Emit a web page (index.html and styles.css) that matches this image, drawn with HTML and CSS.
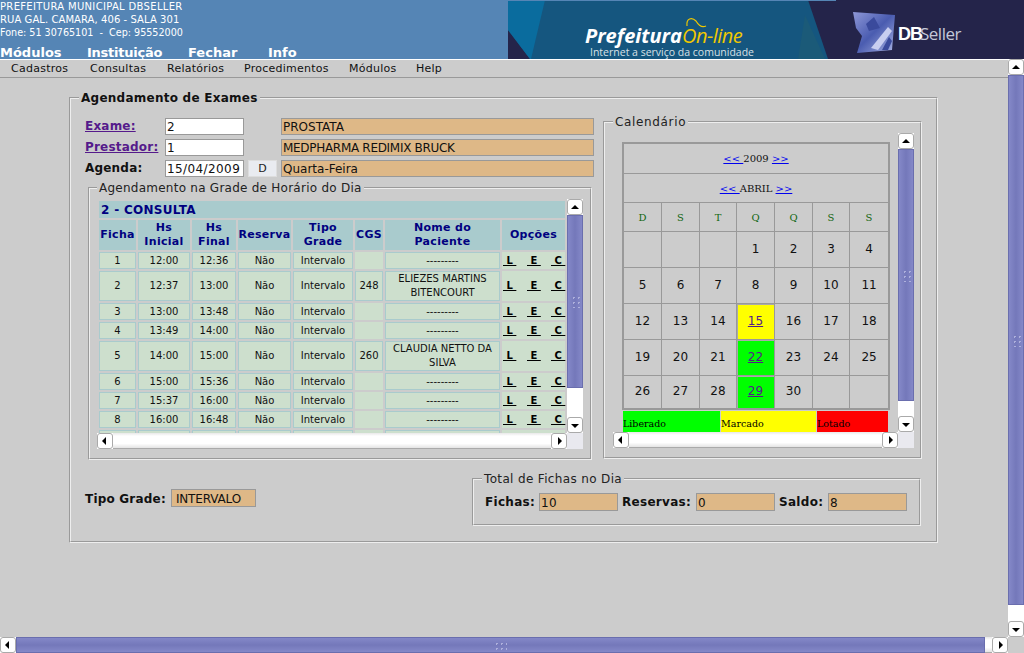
FILE: index.html
```html
<!DOCTYPE html>
<html lang="pt-BR">
  <head>
    <meta charset="UTF-8" />
    <title>Agendamento de Exames</title>
    <link rel="stylesheet" href="styles.css">
  </head>
  <body>
    <div class="topo">
      <div class="topo-esq">
        <div class="endereco">
          <div class="end-1">PREFEITURA MUNICIPAL DBSELLER</div>
          <div class="end-2">RUA GAL. CAMARA, 406 - SALA 301</div>
          <div class="end-3">Fone: 51 30765101 &nbsp;- &nbsp;Cep: 95552000</div>
        </div>
        <div class="nav">
          <span class="nav-1">Módulos</span>
          <span class="nav-2">Instituição</span>
          <span class="nav-3">Fechar</span>
          <span>Info</span>
        </div>
      </div>
      <svg class="banner" width="516" height="59" viewBox="0 0 516 59">
        <defs>
          <linearGradient id="cubo" x1="0" y1="0" x2="1" y2="1">
            <stop offset="0" stop-color="#8f98d8" />
            <stop offset="0.5" stop-color="#4a5cb0" />
            <stop offset="1" stop-color="#aab4e4" />
          </linearGradient>
        </defs>
        <rect width="516" height="59" fill="#24244a" />
        <polygon points="0,0 300,0 320,59 22,59 0,30" fill="#15567f" />
        <polygon points="0,0 37,0 23,59 22,59 0,30" fill="#0a6c9e" />
        <polygon points="297,15 317,59 290,59" fill="#1b5a78" />
        <rect width="328" height="1" fill="#5585b5" />
        <text x="77" y="43" class="logo-pref">Prefeitura</text>
        <text x="174" y="43" class="logo-on">On-line</text>
        <path d="M179 26 C178 18 184 17 188 21 C191 26 194 28 198 26" fill="none" stroke="#f0c800" stroke-width="1.2" />
        <text x="82" y="56" class="logo-sub">Internet a serviço da comunidade</text>
        <polygon points="345,12 387,15 384,50 349,53 354,36 348,28" fill="url(#cubo)" />
        <polygon points="358,24 366,17 372,28 361,31" fill="#3a4a9c" />
        <path d="M363 48 L380 27 L384 31 L370 50 Z" fill="#c8cef0" />
        <path d="M374 50 L381 37 L384 41 L380 50 Z" fill="#3a4a9c" />
        <text x="390" y="40" class="logo-db">DB</text>
        <text x="412" y="40" class="logo-seller">Seller</text>
      </svg>
    </div>

    <div class="corpo">
      <div class="conteudo">
        <div class="menu">
          <span class="m-cad">Cadastros</span>
          <span class="m-con">Consultas</span>
          <span class="m-rel">Relatórios</span>
          <span class="m-pro">Procedimentos</span>
          <span class="m-mod">Módulos</span>
          <span>Help</span>
        </div>

        <fieldset class="quadro-principal">
          <legend>Agendamento de Exames</legend>
          <div class="colunas">
            <div class="col-esq">
              <div class="linha-form">
                <a class="rotulo" href="#">Exame:</a>
                <input class="campo" type="text" value="2" />
                <span></span>
                <input class="campo-desc" type="text" value="PROSTATA" />
              </div>
              <div class="linha-form">
                <a class="rotulo" href="#">Prestador:</a>
                <input class="campo" type="text" value="1" />
                <span></span>
                <input class="campo-desc campo-nome" type="text" value="MEDPHARMA REDIMIX BRUCK" />
              </div>
              <div class="linha-form">
                <b class="rotulo">Agenda:</b>
                <input class="campo campo-num" type="text" value="15/04/2009" />
                <button class="btn-d">D</button>
                <input class="campo-desc" type="text" value="Quarta-Feira" />
              </div>

              <fieldset class="quadro-grade">
                <legend>Agendamento na Grade de Horário do Dia</legend>
                <div class="painel painel-grade">
                  <div class="painel-conteudo">
                    <table class="grade">
                      <colgroup>
                        <col class="c1" /><col class="c2" /><col class="c3" /><col class="c4" />
                        <col class="c5" /><col class="c6" /><col class="c7" /><col class="c8" />
                      </colgroup>
                      <tr class="tit"><th colspan="8">2 - CONSULTA</th></tr>
                      <tr class="cab">
                        <th>Ficha</th><th>Hs<br />Inicial</th><th>Hs<br />Final</th><th>Reserva</th>
                        <th>Tipo<br />Grade</th><th>CGS</th><th>Nome do<br />Paciente</th><th>Opções</th>
                      </tr>
                      <tr>
                        <td>1</td><td>12:00</td><td>12:36</td><td>Não</td><td>Intervalo</td><td class="vazio"></td><td>---------</td>
                        <td class="op"><div class="opcoes"><a href="#">&nbsp;L&nbsp;</a><a href="#">&nbsp;E&nbsp;</a><a href="#">&nbsp;C&nbsp;</a></div></td>
                      </tr>
                      <tr class="alta">
                        <td>2</td><td>12:37</td><td>13:00</td><td>Não</td><td>Intervalo</td><td>248</td><td>ELIEZES MARTINS BITENCOURT</td>
                        <td class="op"><div class="opcoes"><a href="#">&nbsp;L&nbsp;</a><a href="#">&nbsp;E&nbsp;</a><a href="#">&nbsp;C&nbsp;</a></div></td>
                      </tr>
                      <tr>
                        <td>3</td><td>13:00</td><td>13:48</td><td>Não</td><td>Intervalo</td><td class="vazio"></td><td>---------</td>
                        <td class="op"><div class="opcoes"><a href="#">&nbsp;L&nbsp;</a><a href="#">&nbsp;E&nbsp;</a><a href="#">&nbsp;C&nbsp;</a></div></td>
                      </tr>
                      <tr>
                        <td>4</td><td>13:49</td><td>14:00</td><td>Não</td><td>Intervalo</td><td class="vazio"></td><td>---------</td>
                        <td class="op"><div class="opcoes"><a href="#">&nbsp;L&nbsp;</a><a href="#">&nbsp;E&nbsp;</a><a href="#">&nbsp;C&nbsp;</a></div></td>
                      </tr>
                      <tr class="alta">
                        <td>5</td><td>14:00</td><td>15:00</td><td>Não</td><td>Intervalo</td><td>260</td><td>CLAUDIA NETTO DA SILVA</td>
                        <td class="op"><div class="opcoes"><a href="#">&nbsp;L&nbsp;</a><a href="#">&nbsp;E&nbsp;</a><a href="#">&nbsp;C&nbsp;</a></div></td>
                      </tr>
                      <tr>
                        <td>6</td><td>15:00</td><td>15:36</td><td>Não</td><td>Intervalo</td><td class="vazio"></td><td>---------</td>
                        <td class="op"><div class="opcoes"><a href="#">&nbsp;L&nbsp;</a><a href="#">&nbsp;E&nbsp;</a><a href="#">&nbsp;C&nbsp;</a></div></td>
                      </tr>
                      <tr>
                        <td>7</td><td>15:37</td><td>16:00</td><td>Não</td><td>Intervalo</td><td class="vazio"></td><td>---------</td>
                        <td class="op"><div class="opcoes"><a href="#">&nbsp;L&nbsp;</a><a href="#">&nbsp;E&nbsp;</a><a href="#">&nbsp;C&nbsp;</a></div></td>
                      </tr>
                      <tr>
                        <td>8</td><td>16:00</td><td>16:48</td><td>Não</td><td>Intervalo</td><td class="vazio"></td><td>---------</td>
                        <td class="op"><div class="opcoes"><a href="#">&nbsp;L&nbsp;</a><a href="#">&nbsp;E&nbsp;</a><a href="#">&nbsp;C&nbsp;</a></div></td>
                      </tr>
                      <tr>
                        <td></td><td></td><td></td><td></td><td></td><td class="vazio"></td><td></td><td class="op"></td>
                      </tr>
                    </table>
                  </div>
                  <div class="vbar">
                    <div class="sb-btn seta-cima"></div>
                    <div class="thumb-v thumb-grade"><i class="grip"></i></div>
                    <div class="trilho"></div>
                    <div class="sb-btn seta-baixo"></div>
                  </div>
                  <div class="hbar">
                    <div class="sb-btn seta-esq"></div>
                    <div class="trilho-h"></div>
                    <div class="sb-btn seta-dir"></div>
                  </div>
                  <div class="canto"></div>
                </div>
              </fieldset>
            </div>

            <fieldset class="quadro-cal">
              <legend>Calendário</legend>
              <div class="painel painel-cal">
                <div class="painel-conteudo">
                  <table class="cal">
                    <colgroup>
                      <col class="d1" /><col class="d1" /><col class="d2" /><col class="d1" />
                      <col class="d1" /><col class="d2" /><col class="d1" />
                    </colgroup>
                    <tr class="cal-ano"><td colspan="7"><a href="#">&lt;&lt; </a>2009 <a href="#">&gt;&gt; </a></td></tr>
                    <tr class="cal-mes"><td colspan="7"><a href="#">&lt;&lt; </a>ABRIL <a href="#">&gt;&gt; </a></td></tr>
                    <tr class="cal-sem"><td>D</td><td>S</td><td>T</td><td>Q</td><td>Q</td><td>S</td><td>S</td></tr>
                    <tr class="cal-dia"><td></td><td></td><td></td><td>1</td><td>2</td><td>3</td><td>4</td></tr>
                    <tr class="cal-dia"><td>5</td><td>6</td><td>7</td><td>8</td><td>9</td><td>10</td><td>11</td></tr>
                    <tr class="cal-dia"><td>12</td><td>13</td><td>14</td><td class="marcado"><a href="#">15</a></td><td>16</td><td>17</td><td>18</td></tr>
                    <tr class="cal-dia"><td>19</td><td>20</td><td>21</td><td class="liberado"><a href="#">22</a></td><td>23</td><td>24</td><td>25</td></tr>
                    <tr class="cal-fim"><td>26</td><td>27</td><td>28</td><td class="liberado"><a href="#">29</a></td><td>30</td><td></td><td></td></tr>
                  </table>
                  <div class="cal-legenda">
                    <span class="liberado leg-1">Liberado</span>
                    <span class="marcado leg-2">Marcado</span>
                    <span class="lotado leg-3">Lotado</span>
                  </div>
                </div>
                <div class="vbar">
                  <div class="sb-btn seta-cima"></div>
                  <div class="thumb-v thumb-cal"><i class="grip"></i></div>
                  <div class="trilho"></div>
                  <div class="sb-btn seta-baixo"></div>
                </div>
                <div class="hbar">
                  <div class="sb-btn seta-esq"></div>
                  <div class="trilho-h"></div>
                  <div class="sb-btn seta-dir"></div>
                </div>
                <div class="canto"></div>
              </div>
            </fieldset>
          </div>

          <div class="rodape">
            <div class="tipo-grade">
              <b>Tipo Grade:</b>
              <input class="campo-desc campo-tipo" type="text" value="INTERVALO" />
            </div>
            <fieldset class="quadro-total">
              <legend>Total de Fichas no Dia</legend>
              <b class="tot-fichas">Fichas:</b>
              <input class="campo-desc campo-num" type="text" value="10" />
              <b class="tot-reservas">Reservas:</b>
              <input class="campo-desc campo-num" type="text" value="0" />
              <b class="tot-saldo">Saldo:</b>
              <input class="campo-desc campo-num" type="text" value="8" />
            </fieldset>
          </div>
        </fieldset>
      </div>

      <div class="vbar vbar-pagina">
        <div class="sb-btn seta-cima"></div>
        <div class="thumb-v thumb-pagina"><i class="grip"></i></div>
        <div class="trilho"></div>
        <div class="sb-btn seta-baixo"></div>
      </div>

      <div class="hbar">
        <div class="sb-btn seta-esq"></div>
        <div class="thumb-h"><i class="grip-h"></i></div>
        <div class="trilho-h"></div>
        <div class="sb-btn seta-dir"></div>
      </div>
      <div class="canto-pagina"></div>
    </div>
  </body>
</html>
```

FILE: styles.css
```css
* {
  box-sizing: border-box;
}
html,
body {
  margin: 0;
  height: 100%;
  overflow: hidden;
}
body {
  font-family: "DejaVu Sans", Verdana, sans-serif;
  font-size: 11px;
  background: #cccccc;
  color: #111;
  width: 1024px;
  height: 653px;
}

/* topo */
.topo {
  display: flex;
  height: 59px;
  background: #5585b5;
  color: #fff;
}
.topo-esq {
  width: 508px;
}
.endereco {
  font-size: 10px;
  line-height: 13px;
  height: 46px;
  white-space: nowrap;
}
.end-1 {
  letter-spacing: 0.33px;
}
.end-2 {
  letter-spacing: 0.07px;
}
.end-3 {
  font-size: 9.6px;
}
.nav {
  display: flex;
  font-size: 13px;
  font-weight: bold;
  line-height: 14px;
  white-space: nowrap;
}
.nav-1 {
  width: 87px;
}
.nav-2 {
  width: 101px;
  letter-spacing: -0.25px;
}
.nav-3 {
  width: 80px;
}
.banner {
  display: block;
  flex: none;
}
.logo-pref {
  font: italic bold 20px "Open Sans", sans-serif;
  fill: #fff;
}
.logo-on {
  font: italic 20px "Open Sans", sans-serif;
  fill: #f0c800;
  letter-spacing: -0.5px;
}
.logo-sub {
  font: 10.5px "Open Sans", sans-serif;
  fill: #d8e0e6;
}
.logo-db {
  font: bold 18px "Liberation Sans", sans-serif;
  fill: #fff;
  letter-spacing: -1px;
}
.logo-seller {
  font: 17px "Open Sans", sans-serif;
  fill: #c4c8d8;
  letter-spacing: -0.5px;
}

/* area principal */
.corpo {
  display: grid;
  grid-template-columns: 1008px 16px;
  grid-template-rows: 578px 16px;
}
.conteudo {
  overflow: hidden;
}
.menu {
  display: flex;
  height: 19px;
  padding: 1px 0 0 11px;
  border-top: 1px solid #fff;
  border-bottom: 1px solid #999;
  line-height: 15px;
  letter-spacing: 0.25px;
  white-space: nowrap;
}
.m-cad { width: 79px; }
.m-con { width: 77px; }
.m-rel { width: 77px; }
.m-pro { width: 105px; }
.m-mod { width: 67px; }

fieldset {
  margin: 0;
  border: 2px groove #eeeeee;
  min-width: 0;
}
legend {
  line-height: 14px;
  padding: 0 2px;
}

.quadro-principal {
  width: 869px;
  height: 452px;
  margin: 13px 0 0 69px;
  padding: 10px 15px 0 14px;
}
.quadro-principal > legend {
  font-size: 12px;
  font-weight: bold;
  letter-spacing: 0.25px;
  margin-left: -6px;
}
.colunas {
  display: flex;
  gap: 9px;
}
.col-esq {
  flex: none;
  width: 509px;
  padding-top: 3px;
}
.linha-form {
  display: grid;
  grid-template-columns: 80px 79px 37px 313px;
  height: 21px;
  align-items: start;
}
.rotulo {
  font-size: 12px;
  font-weight: bold;
  line-height: 17px;
  letter-spacing: 0.2px;
}
a.rotulo {
  color: #551a8b;
}
input {
  font-family: "DejaVu Sans", Verdana, sans-serif;
  font-size: 12px;
  color: #111;
  margin: 0;
  padding: 1px 0 0 1px;
  border-radius: 0;
}
.campo {
  height: 17px;
  border: 1px solid #999;
  background: #fff;
}
.campo-desc {
  height: 17px;
  border: 1px solid #999;
  background: #deb887;
}
.campo-num {
  letter-spacing: 0.4px;
}
.campo-nome {
  letter-spacing: -0.3px;
}
.btn-d {
  width: 29px;
  height: 17px;
  margin-left: 4px;
  padding: 0;
  border: 1px solid #ddd;
  background: #e9ebf0;
  font: 11px "DejaVu Sans", sans-serif;
  color: #222;
}

.quadro-grade {
  width: 504px;
  height: 279px;
  margin: 0 0 0 3px;
  padding: 4px 7px 0;
}
.quadro-grade > legend {
  margin-left: 0;
  font-size: 12px;
  letter-spacing: 0.25px;
  color: #222;
}
.painel {
  display: grid;
}
.painel-grade {
  grid-template-columns: 470px 16px;
  grid-template-rows: 234px 16px;
}
.painel-conteudo {
  overflow: hidden;
}

/* grade de horarios */
.grade {
  table-layout: fixed;
  width: 470px;
  border-spacing: 2px;
  border-collapse: separate;
  font-size: 10px;
}
.c1 { width: 37px; }
.c2 { width: 52px; }
.c3 { width: 44px; }
.c4 { width: 53px; }
.c5 { width: 60px; }
.c6 { width: 28px; }
.c7 { width: 115px; }
.c8 { width: 63px; }
.grade th {
  padding: 0;
  background: #a9cbcd;
  color: #000080;
  font-size: 11px;
  line-height: 14px;
  letter-spacing: 0.3px;
}
.tit {
  height: 17px;
}
.tit th {
  text-align: left;
  padding-left: 2px;
  font-size: 12px;
}
.cab {
  height: 30px;
}
.grade tr {
  height: 17px;
}
.grade tr.cab,
.grade tr.alta {
  height: 30px;
}
.grade td {
  padding: 0;
  background: #cddfcd;
  border: 1px solid #a9cbcd;
  text-align: center;
  line-height: 14px;
}
.grade td.vazio,
.grade td.op {
  border: none;
}
.opcoes {
  display: flex;
  padding-left: 1px;
}
.opcoes a {
  flex: none;
  width: 24px;
  font-weight: bold;
  color: #000;
  text-align: left;
}

/* barras de rolagem */
.vbar {
  display: flex;
  flex-direction: column;
  width: 16px;
  background: #fff;
}
.hbar {
  display: flex;
  height: 16px;
  background: #fff;
}
.sb-btn {
  position: relative;
  flex: none;
  width: 16px;
  height: 16px;
  background: #fff;
  border: 1px solid #aaa;
  border-radius: 3px;
}
.sb-btn::before {
  content: "";
  position: absolute;
  width: 0;
  height: 0;
  border: 4px solid transparent;
}
.seta-cima::before {
  left: 3px;
  top: 1px;
  border-bottom-color: #000;
}
.seta-baixo::before {
  left: 3px;
  top: 6px;
  border-top-color: #000;
}
.seta-esq::before {
  left: 0;
  top: 3px;
  border-right-color: #000;
}
.seta-dir::before {
  left: 6px;
  top: 3px;
  border-left-color: #000;
}
.thumb-v {
  display: flex;
  align-items: center;
  justify-content: center;
  flex: none;
  border: 1px solid #6a6eae;
  background: linear-gradient(to right, #8488c8, #7478ba 50%, #8488c8);
}
.thumb-grade {
  height: 173px;
}
.thumb-cal {
  height: 252px;
}
.thumb-pagina {
  height: 530px;
}
.thumb-h {
  display: flex;
  align-items: center;
  justify-content: center;
  width: 969px;
  flex: none;
  border: 1px solid #6a6eae;
  background: linear-gradient(to bottom, #8488c8, #7478ba 50%, #8488c8);
}
.grip {
  width: 9px;
  height: 13px;
  background: radial-gradient(circle, #aeb0dc 1px, transparent 1px) 0 0 / 5px 5px;
}
.grip-h {
  width: 13px;
  height: 9px;
  background: radial-gradient(circle, #aeb0dc 1px, transparent 1px) 0 0 / 5px 5px;
}
.trilho {
  flex: 1;
}
.trilho-h {
  flex: 1;
  border-bottom: 1px solid #aaa;
  background: linear-gradient(to bottom, #e8e8e8, #fff 20%, #fff 70%, #e4e4e4);
}
.canto {
  background: #e9e9ef;
}
.vbar-pagina {
  height: 578px;
}
.canto-pagina {
  background: #cccccc;
}

/* calendario */
.quadro-cal {
  flex: none;
  width: 319px;
  height: 344px;
  padding: 4px 6px 0 8px;
}
.quadro-cal > legend {
  margin-left: 0;
  font-size: 12px;
  letter-spacing: 0.65px;
  color: #222;
}
.painel-cal {
  grid-template-columns: 285px 16px;
  grid-template-rows: 299px 16px;
}
.cal {
  table-layout: fixed;
  width: 268px;
  margin: 9px 0 0 9px;
  border: 2px solid #999;
  border-spacing: 0;
  border-collapse: separate;
  text-align: center;
}
.d1 { width: 38px; }
.d2 { width: 37px; }
.cal td {
  padding: 0;
  border-right: 1px solid #999;
  border-bottom: 1px solid #999;
}
.cal td:last-child {
  border-right: none;
}
.cal-fim td {
  border-bottom: none;
}
.cal a {
  color: #0000ee;
}
.cal-ano {
  height: 30px;
}
.cal-mes,
.cal-sem {
  height: 29px;
}
.cal-ano td,
.cal-mes td {
  font: 10px "DejaVu Serif", serif;
}
.cal-sem td {
  font: 10px "DejaVu Serif", serif;
  color: #116611;
}
.cal-dia {
  height: 36px;
}
.cal-fim {
  height: 32px;
}
.cal-dia td,
.cal-fim td {
  font-size: 12px;
  padding-bottom: 2px;
}
.cal td.marcado {
  background: #ffff00;
  box-shadow: inset 1px 1px 0 #aaa;
}
.cal td.liberado {
  background: #00ff00;
  box-shadow: inset 1px 1px 0 #aaa;
}
.cal td.marcado a,
.cal td.liberado a {
  color: #551a8b;
}
.cal-legenda {
  display: flex;
  gap: 1px;
  height: 30px;
  margin: 1px 0 0 10px;
  font: 9.5px "DejaVu Serif", serif;
  color: #000;
}
.cal-legenda span {
  padding-top: 7px;
}
.liberado {
  background: #00ff00;
}
.marcado {
  background: #ffff00;
}
.lotado {
  background: #ff0000;
}
.leg-1 { width: 97px; }
.leg-2 { width: 95px; }
.leg-3 { width: 71px; }

/* rodape */
.rodape {
  display: flex;
  justify-content: space-between;
  margin-top: 12px;
}
.tipo-grade {
  display: flex;
  align-items: flex-start;
  gap: 5px;
  padding-top: 17px;
  font-size: 12px;
}
.tipo-grade b {
  line-height: 21px;
  letter-spacing: 0.2px;
}
.campo-tipo {
  width: 85px;
  height: 18px;
  padding-left: 4px;
  letter-spacing: -0.15px;
}
.quadro-total {
  display: flex;
  width: 449px;
  height: 54px;
  padding: 7px 0 0 11px;
  font-size: 12px;
}
.quadro-total > legend {
  margin-left: -3px;
  font-size: 12px;
  letter-spacing: 0.35px;
  color: #222;
}
.quadro-total b {
  line-height: 18px;
  letter-spacing: 0.3px;
}
.quadro-total input {
  width: 79px;
  height: 18px;
}
.tot-fichas { width: 54px; }
.tot-reservas { width: 74px; margin-left: 4px; }
.tot-saldo { width: 49px; margin-left: 4px; }
```
